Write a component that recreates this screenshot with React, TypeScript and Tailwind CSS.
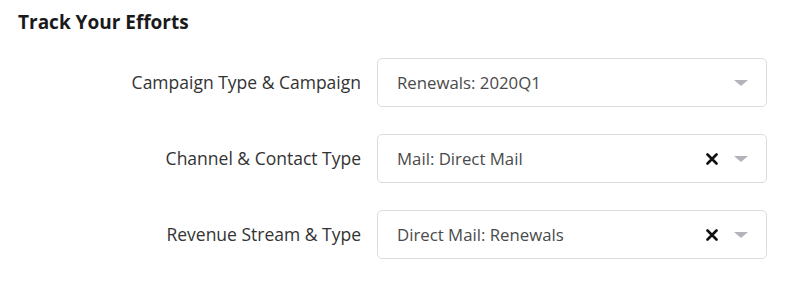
import React from "react";

type Field = { label: string; value: string; clearable: boolean };

const fields: Field[] = [
  { label: "Campaign Type & Campaign", value: "Renewals: 2020Q1", clearable: false },
  { label: "Channel & Contact Type", value: "Mail: Direct Mail", clearable: true },
  { label: "Revenue Stream & Type", value: "Direct Mail: Renewals", clearable: true },
];

function ClearIcon() {
  return (
    <svg width="12" height="12" viewBox="0 0 12 12" className="text-[#111]">
      <path d="M1.5 1.5 L10.5 10.5 M10.5 1.5 L1.5 10.5" stroke="currentColor" strokeWidth="2.6" strokeLinecap="round" />
    </svg>
  );
}

function Caret() {
  return (
    <svg width="14" height="6" viewBox="0 0 14 6">
      <path d="M0 0 H14 L7 6 Z" fill="#b3b3bb" />
    </svg>
  );
}

function SelectBox({ value, clearable }: { value: string; clearable: boolean }) {
  return (
    <div className="w-[390px] h-[49px] flex items-center pl-[19px] pr-[18px] border border-[#dcdcdc] rounded-[5px] bg-white">
      <span className="flex-1 text-[16.8px] text-[#4a4a4a]">{value}</span>
      {clearable && (
        <span className="mr-[16px] flex items-center">
          <ClearIcon />
        </span>
      )}
      <span className="flex items-center">
        <Caret />
      </span>
    </div>
  );
}

export default function App() {
  return (
    <div className="w-[801px] h-[293px] bg-white pl-[18px] pt-[8px]" style={{ fontFamily: '"Open Sans", "Noto Sans", sans-serif' }}>
      <h2 className="text-[19px] font-bold text-[#1a1a1a] leading-[28px]">Track Your Efforts</h2>
      {/* Form rows */}
      <div className="mt-[22px] flex flex-col gap-[27px]">
        {fields.map((f) => (
          <div key={f.label} className="flex items-center">
            <label className="w-[359px] pr-[16px] text-right text-[17.5px] text-[#333]">{f.label}</label>
            <SelectBox value={f.value} clearable={f.clearable} />
          </div>
        ))}
      </div>
    </div>
  );
}
